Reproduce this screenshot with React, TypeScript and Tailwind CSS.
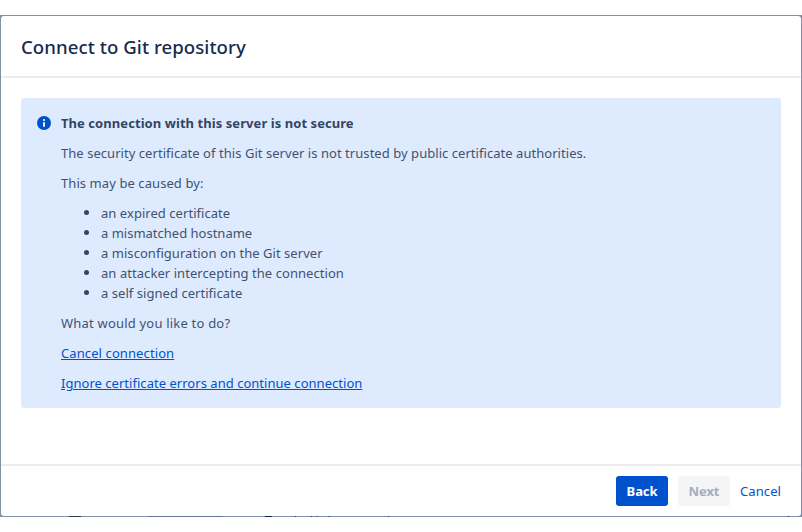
const causes = [
  { text: 'an expired certificate', cls: 'tracking-[0.045px]' },
  { text: 'a mismatched hostname', cls: '' },
  { text: 'a misconfiguration on the Git server', cls: 'tracking-[0.045px]' },
  { text: 'an attacker intercepting the connection', cls: 'tracking-[0.06px]' },
  { text: 'a self signed certificate', cls: 'tracking-[0.045px]' },
];

function InfoIcon() {
  return (
    <svg className="mt-[3px] h-[14px] w-[14px] shrink-0" viewBox="0 0 14 14">
      <circle cx="7" cy="7" r="7" fill="#0052cc" />
      <circle cx="7" cy="4" r="1.05" fill="#fff" />
      <rect x="6.1" y="6" width="1.8" height="5" rx="0.8" fill="#fff" />
    </svg>
  );
}

/* Sliver of the dimmed page visible below the dialog. */
function BackdropEdge() {
  return (
    <div className="flex h-px">
      <span className="ml-[68px] w-[12px] bg-[#2f3d50]" />
      <span className="ml-[67px] w-[75px] bg-[#69749c]" />
      <span className="ml-[42px] w-[7px] bg-[#10214a]" />
      <span className="ml-[23px] w-px bg-[#2b3a66]" />
      <span className="ml-[15px] w-px bg-[#2b3a66]" />
      <span className="ml-[4px] w-[2px] bg-[#56617a]" />
      <span className="ml-[10px] w-[2px] bg-[#3a6591]" />
      <span className="ml-[58px] w-px bg-[#2b3a66]" />
      <span className="ml-[399px] w-px bg-[#2b3a50]" />
    </div>
  );
}

export default function App() {
  return (
    <div className="h-[532px] w-[802px] overflow-hidden bg-white pt-[15px] font-['Noto_Sans','Open_Sans',sans-serif] text-[13px] leading-5 text-[#42526e]">
      <div className="h-[502px] bg-[#8490a5] px-px pt-px">
        <div className="flex h-[500px] flex-col rounded-[3px] bg-white">
          <header className="flex h-[62px] shrink-0 items-center border-b-2 border-[#ebecf0] px-5 pt-[2px]">
            <h1 className="whitespace-nowrap text-[18.6px] leading-6 font-medium tracking-[0.06px] text-[#172b4d]">Connect to Git repository</h1>
          </header>
          <main className="grow px-5 pt-5">
            <section className="flex h-[310px] gap-[10px] rounded-[3px] bg-[#deebff] pl-4 pt-[15px]">
              <InfoIcon />
              <div className="flex flex-col items-start gap-[10px] whitespace-nowrap">
                <h2 className="font-bold tracking-[0.065px] text-[#344563]">The connection with this server is not secure</h2>
                <p className="tracking-[0.045px]">The security certificate of this Git server is not trusted by public certificate authorities.</p>
                <p className="tracking-[0.08px]">This may be caused by:</p>
                <ul>
                  {causes.map((c) => (
                    <li key={c.text} className="flex pl-[23px]">
                      <span className="mr-[12px] mt-[7px] h-[5px] w-[5px] rounded-full bg-[#344563]" />
                      <span className={c.cls}>{c.text}</span>
                    </li>
                  ))}
                </ul>
                <p className="tracking-[0.2px]">What would you like to do?</p>
                <a className="tracking-[0.1px] text-[#0052cc] underline">Cancel connection</a>
                <a className="tracking-[0.03px] text-[#0052cc] underline">Ignore certificate errors and continue connection</a>
              </div>
            </section>
          </main>
          <footer className="flex h-[52px] shrink-0 items-center justify-end border-t-2 border-[#ebecf0] pr-5">
            <button className="h-[30px] w-[52px] rounded-[3px] bg-[#0052cc] font-bold tracking-[-0.1px] text-white">Back</button>
            <button className="ml-[10px] h-[30px] w-[52px] rounded-[3px] bg-[#f4f5f7] font-bold tracking-[-0.1px] text-[#a5adba]">Next</button>
            <button className="ml-[10px] w-[41px] whitespace-nowrap text-left tracking-[0.1px] text-[#0052cc]">Cancel</button>
          </footer>
        </div>
        <BackdropEdge />
      </div>
    </div>
  );
}
